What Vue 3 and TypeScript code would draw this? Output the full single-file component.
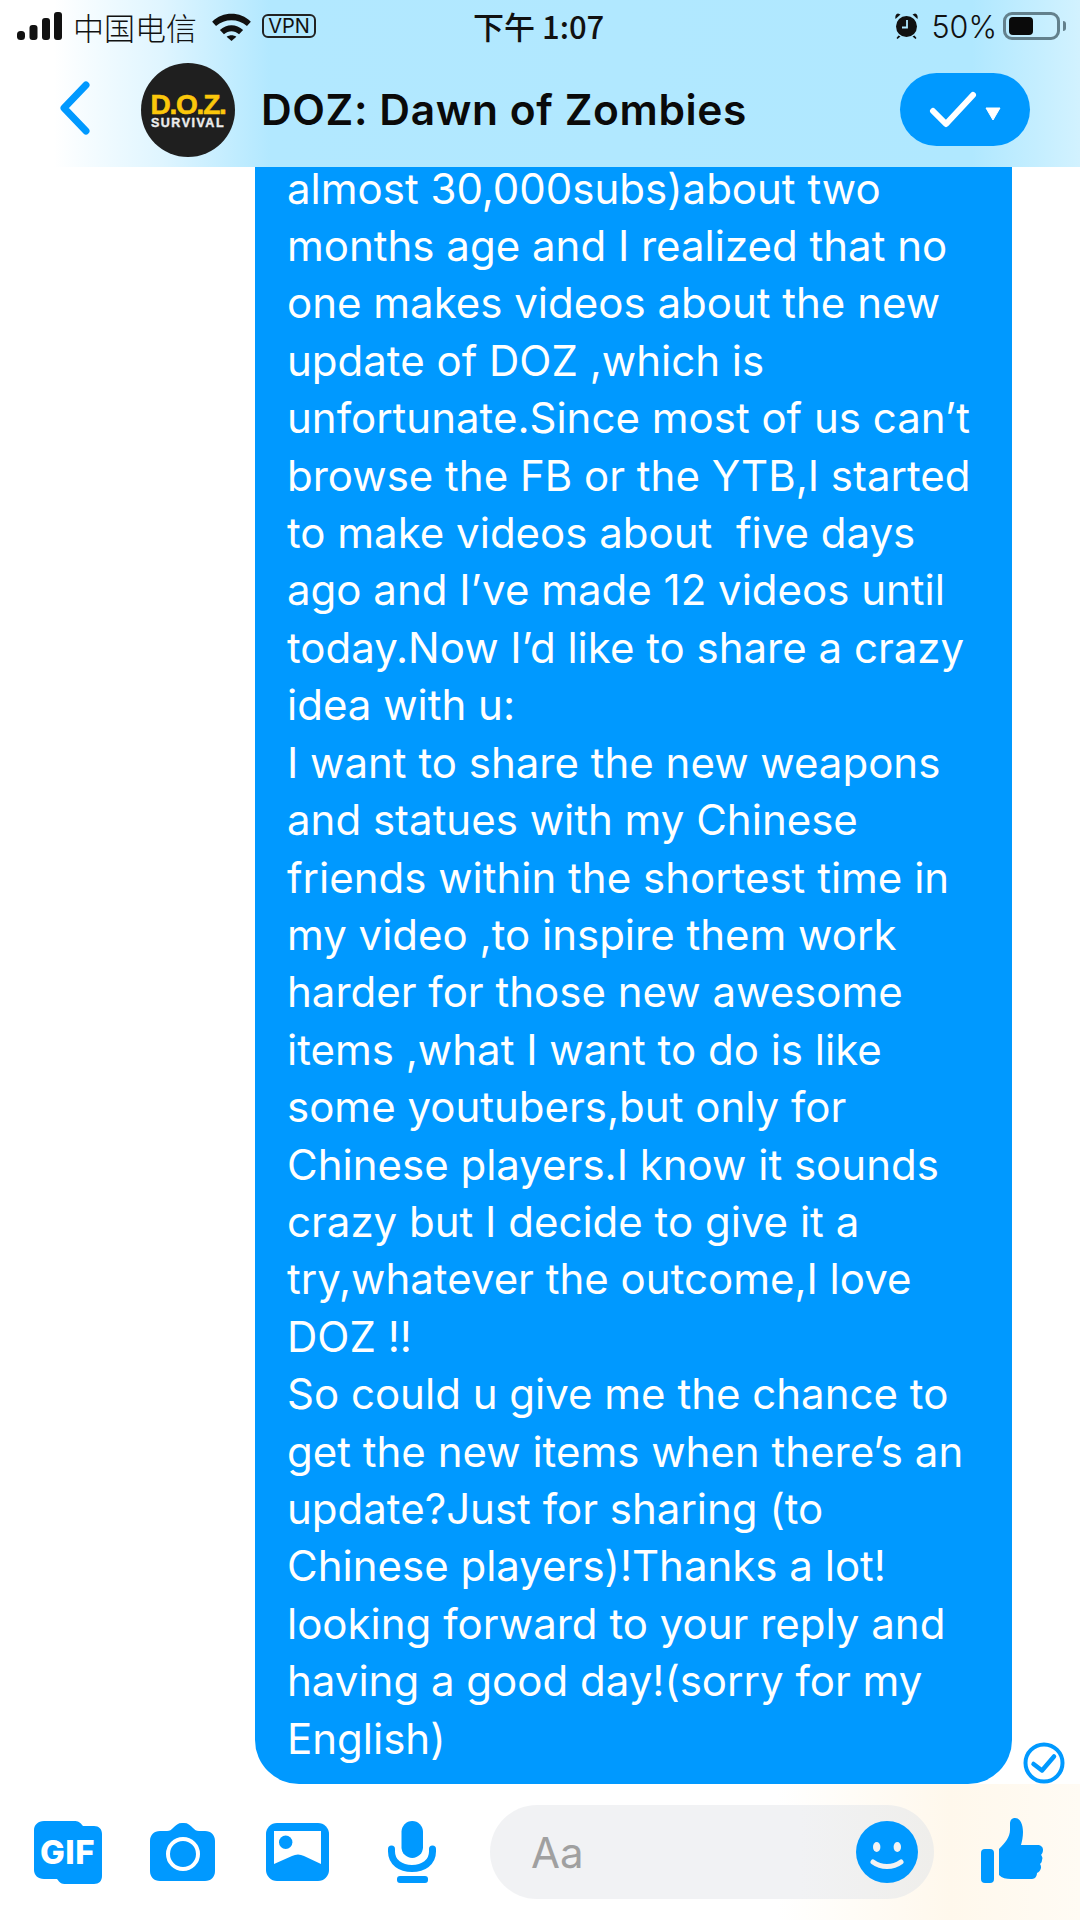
<script setup lang="ts">
const message: string = [
  'almost 30,000subs)about two',
  'months age and I realized that no',
  'one makes videos about the new',
  'update of DOZ ,which is',
  'unfortunate.Since most of us can’t',
  'browse the FB or the YTB,I started',
  'to make videos about  five days',
  'ago and I’ve made 12 videos until',
  'today.Now I’d like to share a crazy',
  'idea with u:',
  'I want to share the new weapons',
  'and statues with my Chinese',
  'friends within the shortest time in',
  'my video ,to inspire them work',
  'harder for those new awesome',
  'items ,what I want to do is like',
  'some youtubers,but only for',
  'Chinese players.I know it sounds',
  'crazy but I decide to give it a',
  'try,whatever the outcome,I love',
  'DOZ !!',
  'So could u give me the chance to',
  'get the new items when there’s an',
  'update?Just for sharing (to',
  'Chinese players)!Thanks a lot!',
  'looking forward to your reply and',
  'having a good day!(sorry for my',
  'English)',
].join('\n')
</script>

<template>
  <div class="screen">
    <header class="top">
      <div class="status">
        <div class="status-left">
          <svg class="signal" width="45" height="28" viewBox="0 0 45 28">
            <rect x="0" y="19" width="8" height="9" rx="3.500" />
            <rect x="12.500" y="13" width="8" height="15" rx="3" />
            <rect x="25" y="6" width="8" height="22" rx="3" />
            <rect x="37" y="0" width="8" height="28" rx="3" />
          </svg>
          <span class="carrier">中国电信</span>
          <svg class="wifi" width="39" height="29" viewBox="0 0 40 30">
            <path d="M0 10C11 -1 29 -1 40 10l-4 4.500C27 6.500 13 6.500 4 14.500z" />
            <path d="M8 18.500C15 12 25 12 32 18.500l-4.200 4.500C23 19 17 19 12.200 23z" />
            <path d="M15 25.500C18 23.400 22 23.400 25 25.500L20 30z" />
          </svg>
          <span class="vpn">VPN</span>
        </div>
        <div class="clock">下午 1:07</div>
        <div class="status-right">
          <svg class="alarm" width="25" height="26" viewBox="0 0 24 26">
            <path d="M1 6 6 1.500 3.500.5C1.500.8.300 3 1 6zM23 6 18 1.500 20.500.5C22.500.8 23.700 3 23 6zM4 22.500 2 25l1 1 3-2.500zM20 22.500 22 25l-1 1-3-2.500z" />
            <circle cx="12" cy="13.500" r="10.500" />
            <path d="M12.500 7v7.500H7.500" fill="none" stroke="#b0e8ff" stroke-width="1.800" />
          </svg>
          <span class="battery-text">50%</span>
          <div class="battery"><div class="battery-fill"></div></div>
          <div class="battery-cap"></div>
        </div>
      </div>
      <div class="nav">
        <svg class="back" width="32" height="54" viewBox="0 0 32 54">
          <path d="M27 4 5 27l22 23" fill="none" stroke="#0099ff" stroke-width="7" stroke-linecap="round" stroke-linejoin="round" />
        </svg>
        <div class="avatar">
          <span class="logo-top">D.O.Z.</span>
          <span class="logo-bottom">SURVIVAL</span>
        </div>
        <div class="title">DOZ: Dawn of Zombies</div>
        <div class="pill">
          <svg width="48" height="38" viewBox="0 0 48 38">
            <path d="M4 20 17 33 44 4" fill="none" stroke="#fff" stroke-width="6" stroke-linecap="round" stroke-linejoin="round" />
          </svg>
          <svg class="caret" width="16" height="14" viewBox="0 0 16 14">
            <path d="M1 1h14L8 13z" fill="#fff" stroke="#fff" stroke-linejoin="round" />
          </svg>
        </div>
      </div>
    </header>

    <main class="chat">
      <div class="thread">
        <div class="bubble">{{ message }}</div>
        <svg class="read" width="42" height="42" viewBox="0 0 42 42">
          <circle cx="21" cy="21" r="18.500" fill="none" stroke="#0099ff" stroke-width="4" />
          <path d="M10.500 22 19 28.500 31 14.500" fill="none" stroke="#0099ff" stroke-width="4.500" stroke-linecap="round" stroke-linejoin="round" />
        </svg>
      </div>
    </main>

    <footer class="composer">
      <div class="gif">
        <svg width="68" height="63" viewBox="0 0 68 63">
          <path d="M10 0h30c4 0 6 1 9 5h11c5 0 8 3 8 8v42c0 5-3 8-8 8H32c-5 0-6-1-9-5H10c-6 0-10-4-10-9V9C0 4 4 0 10 0z" fill="#0099ff" />
        </svg>
        <span class="gif-label">GIF</span>
      </div>
      <svg class="ic-camera" width="65" height="58" viewBox="0 0 65 58">
        <path d="M10 8h7c3 0 4-1 6-3 3-3 5-5 9-5h2c4 0 6 2 9 5 2 2 3 3 6 3h6c6 0 10 4 10 10v30c0 6-4 10-10 10H10C4 58 0 54 0 48V18C0 12 4 8 10 8z" fill="#0099ff" />
        <circle cx="33" cy="31" r="15" fill="none" stroke="#fff" stroke-width="4" />
      </svg>
      <svg class="ic-photo" width="63" height="58" viewBox="0 0 63 58">
        <rect width="63" height="58" rx="11" fill="#0099ff" />
        <path d="M8 8h47v33L38 33c-4-2-8-2-12 0L8 41z" fill="#fff" />
        <circle cx="19.700" cy="19.300" r="6.700" fill="#0099ff" />
      </svg>
      <svg class="ic-mic" width="48" height="62" viewBox="0 0 48 62">
        <rect x="13.500" y="0" width="21.500" height="37" rx="10.700" fill="#0099ff" />
        <path d="M3.500 28v2.500c0 11 9.200 17 20.500 17s20.500-6 20.500-17V28" fill="none" stroke="#0099ff" stroke-width="7" stroke-linecap="round" />
        <rect x="9" y="55" width="31" height="7" rx="3" fill="#0099ff" />
      </svg>
      <div class="input">
        <span class="placeholder">Aa</span>
        <svg width="62" height="62" viewBox="0 0 62 62">
          <circle cx="31" cy="31" r="31" fill="#0099ff" />
          <ellipse cx="20.700" cy="26" rx="3.700" ry="5" fill="#f3f3f3" />
          <ellipse cx="41.300" cy="26" rx="3.700" ry="5" fill="#f3f3f3" />
          <path d="M17 41c8 6 20 6 28 0" fill="none" stroke="#f3f3f3" stroke-width="5" stroke-linecap="round" />
        </svg>
      </div>
      <svg class="ic-like" width="62" height="65" viewBox="0 0 62 65">
        <rect x="0" y="31" width="13" height="34" rx="4" fill="#0099ff" />
        <path d="M18 31c6-6 11-12 11-19V6c0-4 2-6 5-6 5 0 8 6 8 14 0 5-1 9-2 13h16c4 0 6 2 6 5 0 2-1 4-2 5 1 1 2 3 1 5 0 2-1 3-2 4 1 1 1 3 1 4-1 3-2 4-4 5 0 3-2 6-5 6H30c-5 0-9-1-12-4z" fill="#0099ff" />
      </svg>
    </footer>
  </div>
</template>

<style>
html, body { margin: 0; background: #fff; }
</style>

<style scoped>
.screen {
  width: 1080px;
  height: 1920px;
  display: flex;
  flex-direction: column;
  overflow: hidden;
  font-family: Inter, "Liberation Sans", "Noto Sans CJK SC", sans-serif;
  background: #fff;
}
.top {
  height: 167px;
  flex: none;
  position: relative;
  z-index: 1;
  background: linear-gradient(90deg, #ffffff 0%, #ffffff 5%, #dff5ff 15%, #b2e8ff 25%, #b0e8ff 90%, #d2f2ff 100%);
}
.status {
  height: 52px;
  display: flex;
  align-items: center;
  padding: 0 14px 0 17px;
  color: #111;
  font-size: 30px;
}
.status-left { display: flex; align-items: center; }
.signal { fill: #111; margin-right: 11px; }
.carrier { font-family: "Noto Sans CJK SC", sans-serif; font-size: 31px; font-weight: 300; }
.wifi { fill: #111; margin-left: 15px; margin-right: 11px; }
.vpn {
  border: 2px solid #222;
  border-radius: 6px;
  font-size: 20px;
  line-height: 20px;
  padding: 0 3px;
  width: 44px;
  text-align: center;
}
.clock {
  margin-left: 157px;
  font-family: "Noto Sans CJK SC", Inter, sans-serif;
  font-size: 31px;
  line-height: 36px;
  font-weight: 500;
}
.status-right { display: flex; align-items: center; margin-left: auto; }
.alarm { fill: #111; margin-right: 12px; }
.battery-text { font-size: 30.5px; font-weight: 300; margin-right: 6px; }
.battery {
  width: 57px;
  height: 28px;
  border: 3px solid #63808c;
  border-radius: 9px;
  padding: 2px 3px;
  box-sizing: border-box;
}
.battery-fill { width: 24px; height: 100%; background: #0a0a0a; border-radius: 4px; }
.battery-cap { width: 3px; height: 10px; background: #63808c; margin-left: 3px; border-radius: 0 3px 3px 0; }
.nav {
  height: 115px;
  display: flex;
  align-items: center;
  padding-left: 59px;
}
.back { margin-top: -3px; flex: none; }
.avatar {
  width: 94px;
  height: 94px;
  border-radius: 50%;
  background: #1f1f1f;
  margin-left: 50px;
  display: flex;
  flex-direction: column;
  align-items: center;
  justify-content: center;
  flex: none;
  font-family: "Liberation Sans", sans-serif;
  font-weight: 700;
}
.logo-top { color: #fbc70b; font-size: 28px; line-height: 25px; letter-spacing: -1.200px; -webkit-text-stroke: .6px #fbc70b; margin-top: 2px; white-space: nowrap; }
.logo-bottom { color: #ececec; font-size: 12.500px; line-height: 12px; letter-spacing: 1.500px; -webkit-text-stroke: .4px #ececec; white-space: nowrap; }
.title {
  margin-left: 26px;
  font-size: 42.500px;
  letter-spacing: .6px;
  font-weight: 600;
  color: #0a0a0a;
  white-space: nowrap;
}
.pill {
  margin-left: auto;
  margin-right: 50px;
  width: 130px;
  height: 73px;
  background: #0099ff;
  border-radius: 37px;
  display: flex;
  align-items: center;
  justify-content: center;
  gap: 8px;
}
.caret { margin-top: 9px; }
.chat { flex: 1; min-height: 0; margin-top: -10px; }
.thread {
  height: 100%;
  display: flex;
  align-items: flex-end;
  padding-left: 255px;
}
.bubble {
  width: 757px;
  box-sizing: border-box;
  background: #0099ff;
  color: #fff;
  font-size: 42px;
  line-height: 57.400px;
  padding: 0 0 17px 32px;
  border-radius: 0 0 44px 44px;
  white-space: pre-wrap;
  flex: none;
}
.read { flex: none; margin-left: 11px; }
.composer {
  height: 136px;
  flex: none;
  display: flex;
  align-items: flex-start;
  padding-left: 34px;
  box-sizing: border-box;
  background: linear-gradient(90deg, #fff 0%, #fff 72%, #fff8ec 88%, #fffbf4 100%);
}
.gif { position: relative; width: 68px; height: 63px; margin-top: 37px; flex: none; }
.gif-label {
  position: absolute;
  left: 6px;
  top: 9px;
  color: #fff;
  font-size: 33px;
  font-weight: 800;
  line-height: 44px;
  letter-spacing: .5px;
}
.ic-camera { margin: 39px 0 0 48px; flex: none; }
.ic-photo { margin: 39px 0 0 51px; flex: none; }
.ic-mic { margin: 37px 0 0 59px; flex: none; }
.input {
  margin: 21px 0 0 54px;
  width: 444px;
  height: 94px;
  background: linear-gradient(90deg, #f1f2f4 0%, #f1f2f4 70%, #efeeeb 100%);
  border-radius: 47px;
  display: flex;
  align-items: center;
  justify-content: space-between;
  padding: 0 16px 0 41px;
  box-sizing: border-box;
  flex: none;
}
.placeholder { font-size: 42px; color: #a0a0a0; }
.ic-like { margin: 34px 0 0 47px; flex: none; }
</style>
